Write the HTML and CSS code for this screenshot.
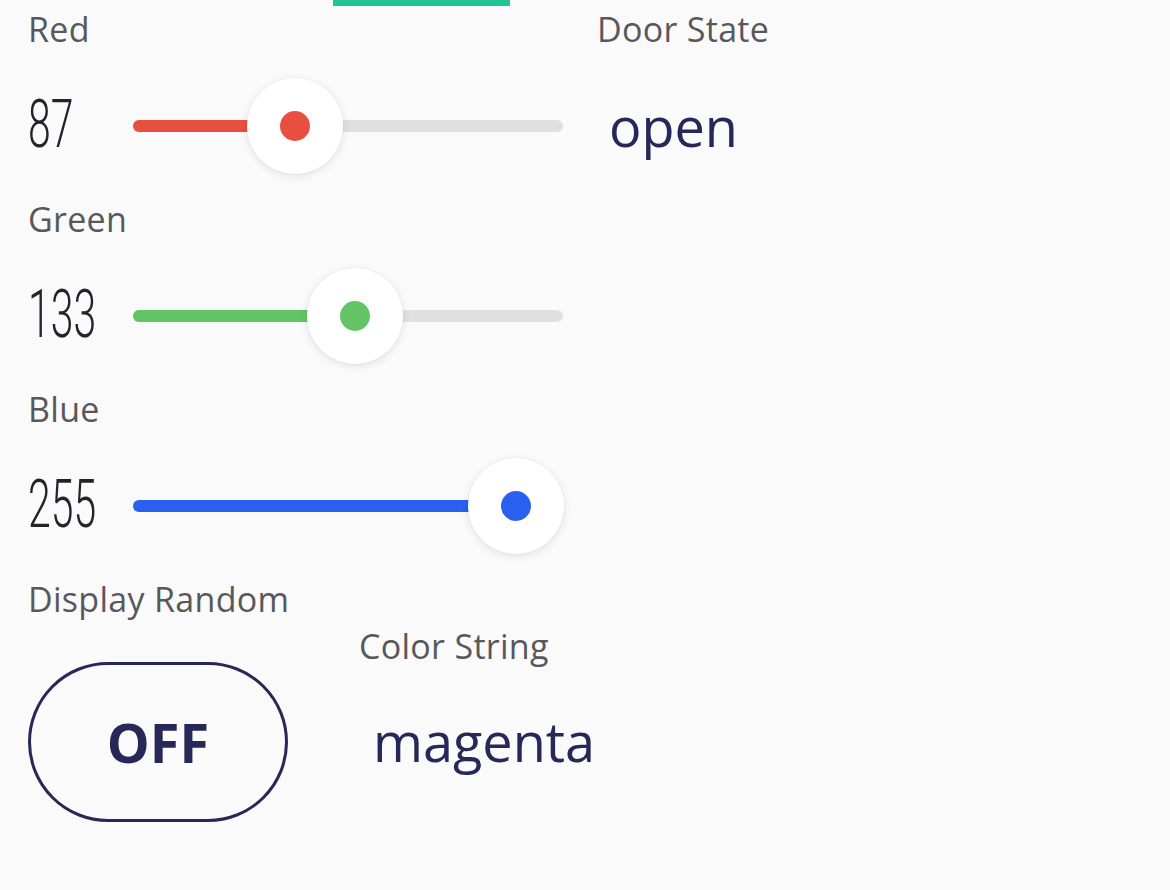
FILE: index.html
```html
<!DOCTYPE html>
<html lang="en">
<head>
<meta charset="utf-8">
<title>Dashboard</title>
<link rel="stylesheet" href="styles.css">
</head>
<body>
<div class="page">
  <div class="tab-indicator"></div>
  <div class="top">
    <div class="left">
      <div class="widget slider-widget">
        <div class="label">Red</div>
        <div class="slider-row">
          <div class="num"><span>87</span></div>
          <div class="track red" style="--p:0.3412">
            <div class="fill"></div>
            <div class="thumb"><div class="dot"></div></div>
          </div>
        </div>
      </div>
      <div class="widget slider-widget">
        <div class="label">Green</div>
        <div class="slider-row">
          <div class="num"><span>133</span></div>
          <div class="track green" style="--p:0.5216">
            <div class="fill"></div>
            <div class="thumb"><div class="dot"></div></div>
          </div>
        </div>
      </div>
      <div class="widget slider-widget">
        <div class="label">Blue</div>
        <div class="slider-row">
          <div class="num"><span>255</span></div>
          <div class="track blue" style="--p:1">
            <div class="fill"></div>
            <div class="thumb"><div class="dot"></div></div>
          </div>
        </div>
      </div>
    </div>
    <div class="right">
      <div class="widget">
        <div class="label">Door State</div>
        <div class="value value-door">open</div>
      </div>
    </div>
  </div>
  <div class="bottom">
    <div class="widget button-widget">
      <div class="label">Display Random</div>
      <button class="toggle">OFF</button>
    </div>
    <div class="widget string-widget">
      <div class="label">Color String</div>
      <div class="value value-string">magenta</div>
    </div>
  </div>
</div>
</body>
</html>
```

FILE: styles.css
```css
* { box-sizing: border-box; }

html, body {
  margin: 0;
  padding: 0;
  background: #fafafa;
}

body {
  font-family: "Open Sans", "Noto Sans", sans-serif;
  width: 1170px;
  height: 890px;
  overflow: hidden;
}

.page {
  position: relative;
  padding-top: 9px;
}

.tab-indicator {
  position: absolute;
  top: 0;
  left: 333px;
  width: 177px;
  height: 6px;
  background: #23c393;
}

.top {
  display: flex;
  align-items: flex-start;
}

.left {
  width: 597px;
  padding-left: 28px;
}

.label {
  font-size: 34px;
  letter-spacing: 0.3px;
  line-height: 40px;
  height: 40px;
  color: #58585c;
  white-space: nowrap;
}

.slider-widget {
  height: 190px;
}

.slider-row {
  margin-top: 29px;
  height: 96px;
  display: flex;
  align-items: center;
}

.num {
  width: 105px;
  height: 66px;
  margin-bottom: 3px;
}

.num span {
  display: inline-block;
  font-family: Roboto, "Liberation Sans", sans-serif;
  font-weight: 300;
  font-size: 66px;
  line-height: 66px;
  color: #23232a;
  transform: scaleX(0.62);
  transform-origin: left center;
  letter-spacing: 0;
}

.track {
  position: relative;
  width: 430px;
  height: 12px;
  border-radius: 6px;
  background: #e0e0e0;
}

.fill {
  height: 100%;
  border-radius: 6px;
  width: calc(48px + var(--p) * (100% - 95px));
}

.thumb {
  position: absolute;
  top: 50%;
  left: calc(47.5px + var(--p) * (100% - 95px));
  width: 96px;
  height: 96px;
  margin: -48px 0 0 -48px;
  border-radius: 50%;
  background: #ffffff;
  box-shadow: 0 2px 8px rgba(0, 0, 0, 0.10), 0 0 2px rgba(0, 0, 0, 0.06);
  display: flex;
  align-items: center;
  justify-content: center;
}

.dot {
  width: 30px;
  height: 30px;
  border-radius: 50%;
}

.red .fill, .red .dot { background: #e94f3e; }
.green .fill, .green .dot { background: #63c466; }
.blue .fill, .blue .dot { background: #2a60f0; }

.value {
  font-size: 54px;
  font-weight: 500;
  line-height: 64px;
  color: #262857;
  padding-left: 12px;
  white-space: nowrap;
}

.value-door {
  margin-top: 45px;
}

.bottom {
  display: flex;
  align-items: flex-start;
  padding-left: 28px;
}

.button-widget {
  width: 331px;
}

.toggle {
  display: flex;
  align-items: center;
  justify-content: center;
  margin-top: 43px;
  width: 260px;
  height: 160px;
  border: 3px solid #262857;
  border-radius: 80px;
  background: transparent;
  font-family: "Open Sans", "Noto Sans", sans-serif;
  font-weight: 700;
  font-size: 54px;
  color: #262857;
  padding: 0;
}

.string-widget {
  margin-top: 47px;
}

.value-string {
  margin-top: 43px;
  padding-left: 14px;
}
```
